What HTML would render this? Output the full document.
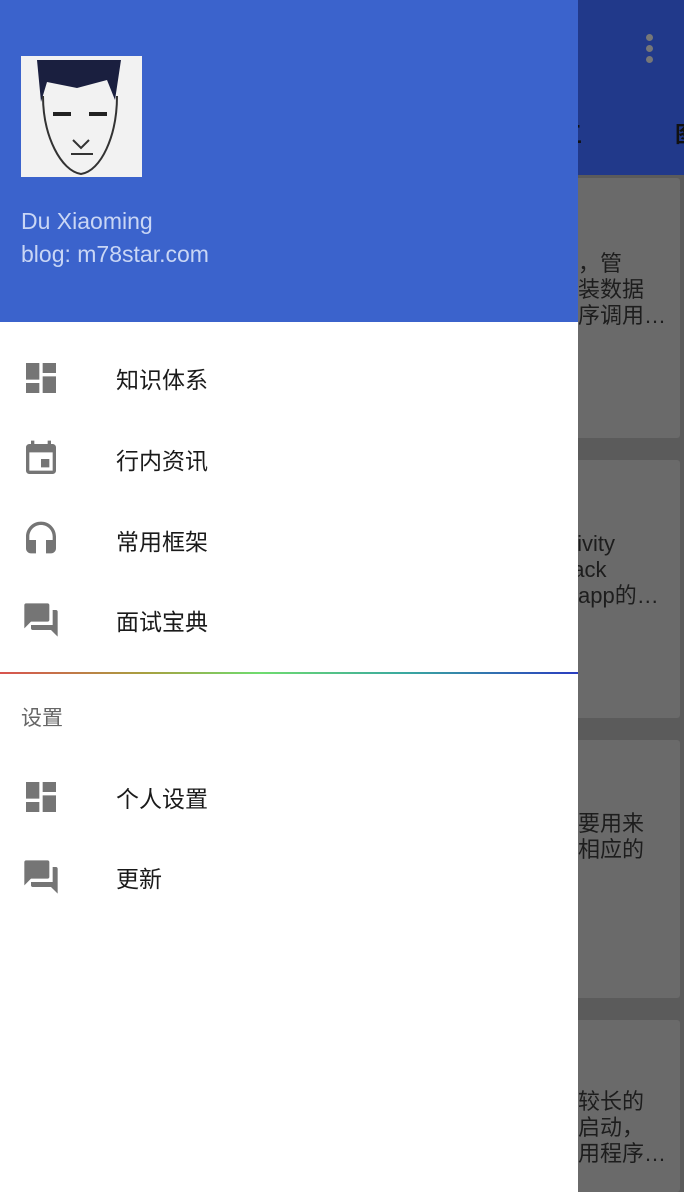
<!DOCTYPE html>
<html><head><meta charset="utf-8"><style>
*{margin:0;padding:0;box-sizing:border-box}
body{width:684px;height:1192px;overflow:hidden;position:relative;background:#5b5b5b;font-family:"Liberation Sans","Noto Sans CJK SC",sans-serif}
.bar{position:absolute;left:0;top:0;width:684px;height:175px;background:#21398a}
.card{position:absolute;left:560px;width:120px;background:#6a6a6a;border-radius:3px}
.ct{position:absolute;color:#1d1d1d;font-size:22px;line-height:26px;white-space:nowrap}
.drawer{position:absolute;left:0;top:0;width:578px;height:1192px;background:#fff}
.head{position:absolute;left:0;top:0;width:578px;height:322px;background:#3b63cc}
.av{position:absolute;left:21px;top:56px;width:121px;height:121px;background:#f2f2f2;overflow:hidden}
.name{position:absolute;left:21px;color:#c9d6f5;font-size:23px}
.item{position:absolute;left:0;width:578px;height:40px}
.item svg{position:absolute;left:21px;top:1px}
.item span{position:absolute;left:116px;top:4px;font-size:23px;color:#1a1a1a}
.div{position:absolute;left:0;top:672px;width:578px;height:2px;background:linear-gradient(90deg,#d9534f,#a8a040 25%,#6fdc6f 45%,#3aa9a0 70%,#2a3cc0)}
</style></head><body>
<div class="bar"></div>
<div style="position:absolute;left:646px;top:34px;width:7px;height:7px;border-radius:50%;background:#777"></div>
<div style="position:absolute;left:646px;top:45px;width:7px;height:7px;border-radius:50%;background:#777"></div>
<div style="position:absolute;left:646px;top:56px;width:7px;height:7px;border-radius:50%;background:#777"></div>
<div class="ct" style="left:560px;top:122px;color:#111;font-weight:bold">五</div>
<div class="ct" style="left:675px;top:122px;color:#111;font-weight:bold">图</div>
<div class="card" style="top:178px;height:260px"></div>
<div class="card" style="top:460px;height:258px"></div>
<div class="card" style="top:740px;height:258px"></div>
<div class="card" style="top:1020px;height:172px"></div>
<div class="ct" style="left:556px;top:251px">件，管</div>
<div class="ct" style="left:556px;top:277px">封装数据</div>
<div class="ct" style="left:556px;top:303px">程序调用…</div>
<div class="ct" style="left:560px;top:531px">ctivity</div>
<div class="ct" style="left:560px;top:557px">back</div>
<div class="ct" style="left:556px;top:583px">该app的…</div>
<div class="ct" style="left:556px;top:811px">主要用来</div>
<div class="ct" style="left:556px;top:837px">为相应的</div>
<div class="ct" style="left:556px;top:1089px">比较长的</div>
<div class="ct" style="left:556px;top:1115px">件启动，</div>
<div class="ct" style="left:556px;top:1141px">应用程序…</div>
<div class="drawer">
<div class="head">
<div class="av"><svg width="121" height="121" viewBox="0 0 121 121"><path d="M16 4h84l-6 40-8-20-30 8-30-6-6 20z" fill="#1a1f3f"/><path d="M22 40c0 40 18 75 38 78 20-3 36-38 36-78" fill="none" stroke="#333" stroke-width="2"/><path d="M32 58h18M68 58h18" stroke="#222" stroke-width="4"/><path d="M52 84l8 8 8-8M50 98h22" stroke="#333" stroke-width="2" fill="none"/></svg></div>
<div class="name" style="top:208px">Du Xiaoming</div>
<div class="name" style="top:241px">blog: m78star.com</div>
</div>
<div class="item" style="top:357px"><svg width="40" height="40" viewBox="0 0 24 24" fill="#757575"><path d="M3 13h8V3H3v10zm0 8h8v-6H3v6zm10 0h8V11h-8v10zm0-18v6h8V3h-8z"/></svg><span>知识体系</span></div>
<div class="item" style="top:438px"><svg width="40" height="40" viewBox="0 0 24 24" fill="#757575"><path d="M17 12h-5v5h5v-5zM16 1v2H8V1H6v2H5c-1.11 0-1.99.9-1.99 2L3 19c0 1.1.89 2 2 2h14c1.1 0 2-.9 2-2V5c0-1.1-.9-2-2-2h-1V1h-2zm3 18H5V8h14v11z"/></svg><span>行内资讯</span></div>
<div class="item" style="top:519px"><svg width="40" height="40" viewBox="0 0 24 24" fill="#757575"><path d="M12 1c-4.970 0-9 4.03-9 9v7c0 1.66 1.34 3 3 3h3v-8H5v-2c0-3.870 3.13-7 7-7s7 3.13 7 7v2h-4v8h3c1.66 0 3-1.34 3-3v-7c0-4.97-4.03-9-9-9z"/></svg><span>常用框架</span></div>
<div class="item" style="top:599px"><svg width="40" height="40" viewBox="0 0 24 24" fill="#757575"><path d="M21 6h-2v9H6v2c0 .55.45 1 1 1h11l4 4V7c0-.55-.45-1-1-1zm-4 6V3c0-.55-.45-1-1-1H3c-.55 0-1 .45-1 1v14l4-4h10c.55 0 1-.45 1-1z"/></svg><span>面试宝典</span></div>
<div class="div"></div>
<div style="position:absolute;left:21px;top:702px;font-size:21px;color:#666">设置</div>
<div class="item" style="top:776px"><svg width="40" height="40" viewBox="0 0 24 24" fill="#757575"><path d="M3 13h8V3H3v10zm0 8h8v-6H3v6zm10 0h8V11h-8v10zm0-18v6h8V3h-8z"/></svg><span>个人设置</span></div>
<div class="item" style="top:856px"><svg width="40" height="40" viewBox="0 0 24 24" fill="#757575"><path d="M21 6h-2v9H6v2c0 .55.45 1 1 1h11l4 4V7c0-.55-.45-1-1-1zm-4 6V3c0-.55-.45-1-1-1H3c-.55 0-1 .45-1 1v14l4-4h10c.55 0 1-.45 1-1z"/></svg><span>更新</span></div>
</div>
</body></html>
